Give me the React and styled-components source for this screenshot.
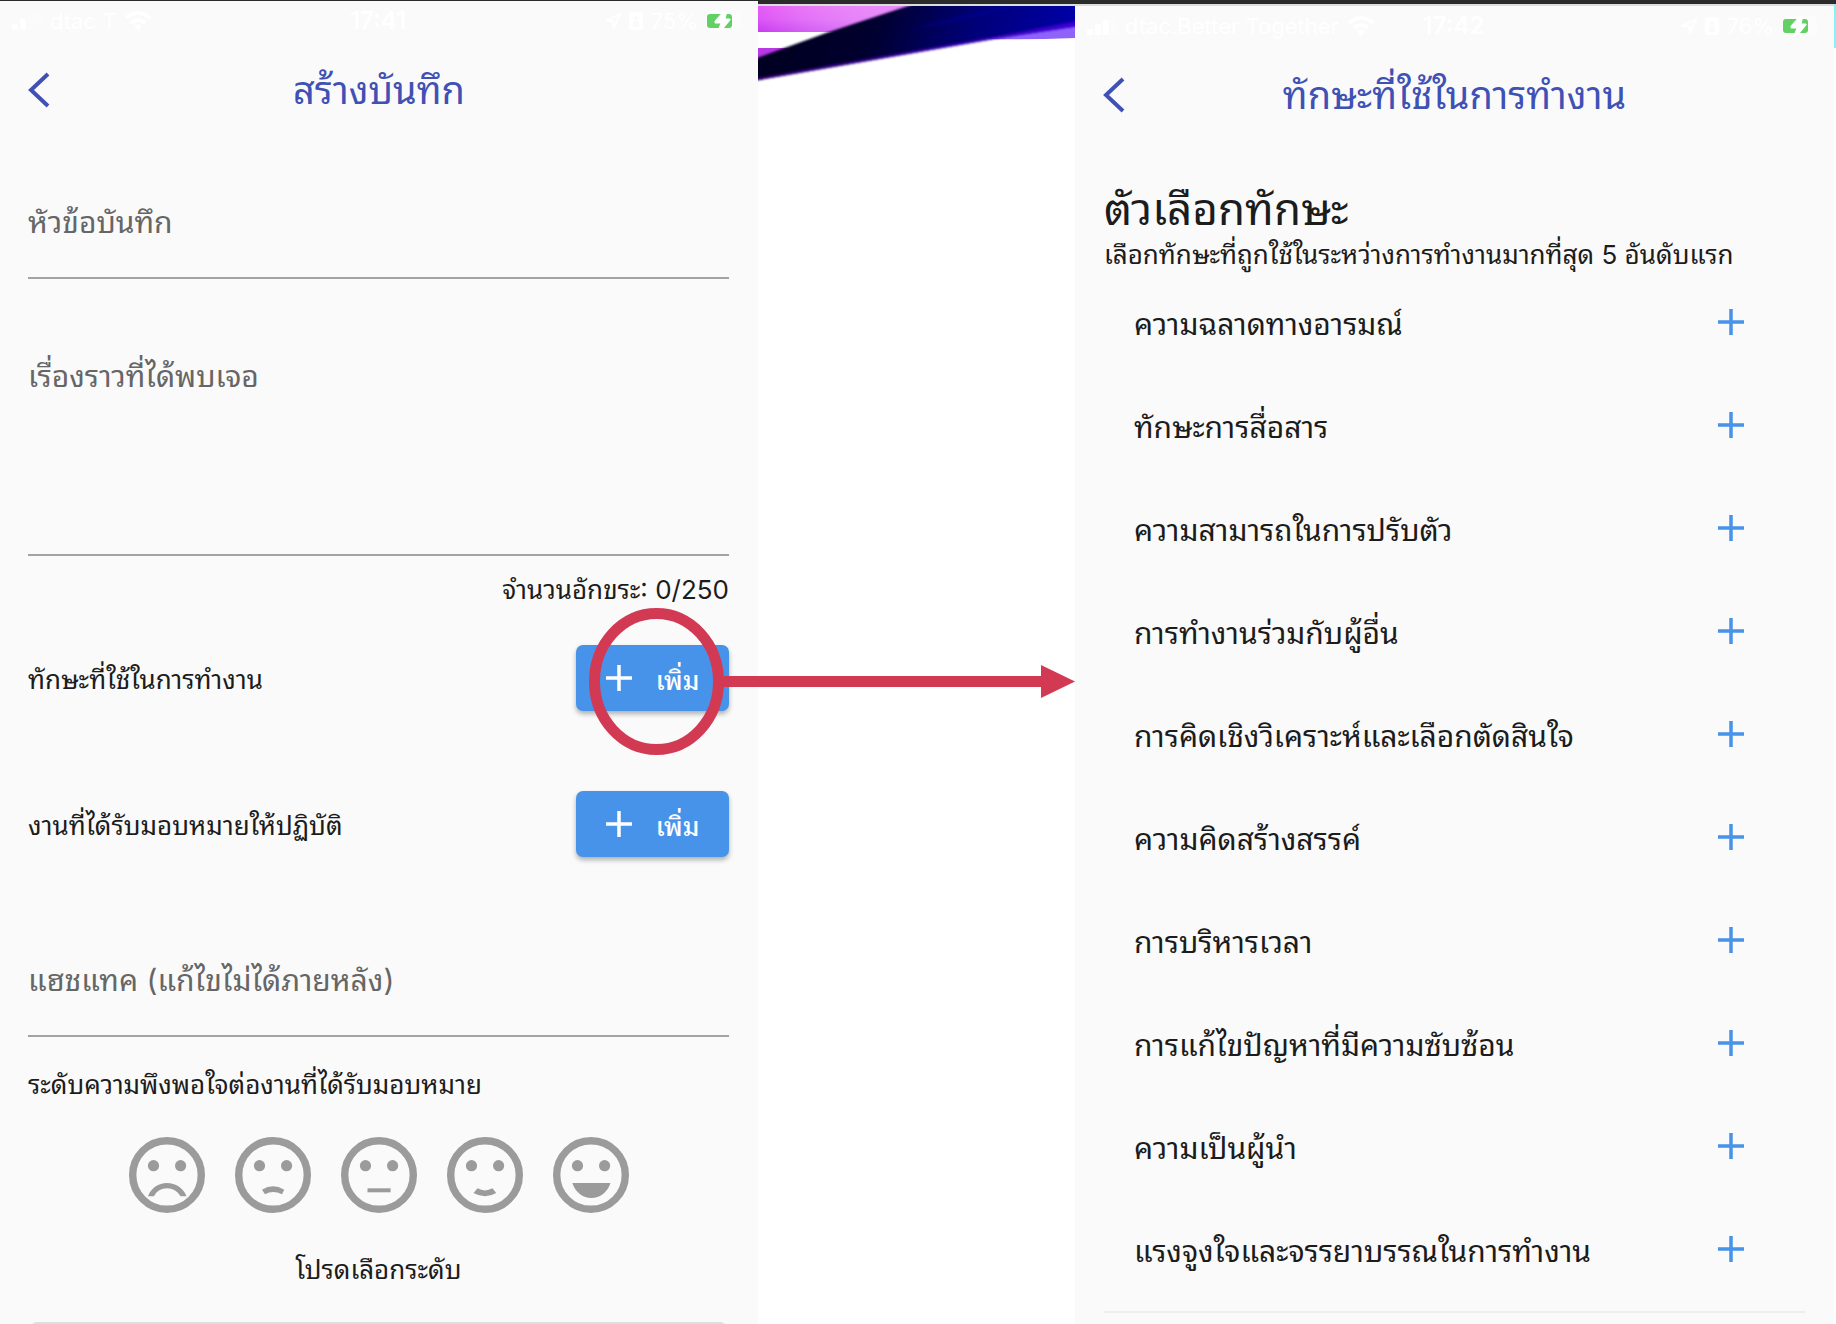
import React, { useState } from 'react';
import styled, { createGlobalStyle } from 'styled-components';

const skills = [
  'ความฉลาดทางอารมณ์',
  'ทักษะการสื่อสาร',
  'ความสามารถในการปรับตัว',
  'การทำงานร่วมกับผู้อื่น',
  'การคิดเชิงวิเคราะห์และเลือกตัดสินใจ',
  'ความคิดสร้างสรรค์',
  'การบริหารเวลา',
  'การแก้ไขปัญหาที่มีความซับซ้อน',
  'ความเป็นผู้นำ',
  'แรงจูงใจและจรรยาบรรณในการทำงาน',
];

const moods = [
  {
    name: 'แย่มาก',
    mouth:
      'M19 59.3C22 51 29.5 46 38 46S54.5 51 57.5 59.3H51.5C48.5 54 43.5 51.3 38 51.3S27.5 54 25 59.3Z',
  },
  {
    name: 'แย่',
    mouth: 'M27 52.7Q38 46 49.2 52.7L47 57.3Q38 52.7 30 57.3Z',
  },
  { name: 'ปานกลาง', mouth: 'M26.5 51.3H49.6V55.3H26.5Z' },
  {
    name: 'ดี',
    mouth: 'M30.6 51.3Q38 55.6 45.4 51.3L49.2 56Q38 62.6 26.5 56Z',
  },
  {
    name: 'ดีมาก',
    mouth: 'M19.3 46H57.5C54.5 55.3 47 61 38.4 61S22.3 55.3 19.3 46Z',
  },
];

const App = () => {
  const [story, setStory] = useState('');

  return (
    <Page>
      <GlobalStyle />
      <LogScreen>
        <StatusBar carrier="dtac T" bars={2} time="17:41" charge="75%" />
        <Header title="สร้างบันทึก" />
        <Form>
          <TextInput aria-label="หัวข้อบันทึก" placeholder="หัวข้อบันทึก" />
          <TextArea
            aria-label="เรื่องราวที่ได้พบเจอ"
            placeholder="เรื่องราวที่ได้พบเจอ"
            maxLength={250}
            value={story}
            onChange={e => setStory(e.target.value)}
          />
          <Counter>จำนวนอักขระ: {story.length}/250</Counter>
          <AddRow>
            <RowLabel>ทักษะที่ใช้ในการทำงาน</RowLabel>
            <ButtonAnchor>
              <AddButton />
              <Ring viewBox="0 0 135 147">
                <ellipse cx="67.5" cy="73.5" rx="62" ry="68" />
              </Ring>
              <Arrow>
                <ArrowShaft />
                <ArrowHead viewBox="0 0 34 33">
                  <path d="M0 0L34 16.5L0 33Z" />
                </ArrowHead>
              </Arrow>
            </ButtonAnchor>
          </AddRow>
          <AddRow>
            <RowLabel>งานที่ได้รับมอบหมายให้ปฏิบัติ</RowLabel>
            <AddButton />
          </AddRow>
          <TextInput
            aria-label="แฮชแทค"
            placeholder="แฮชแทค (แก้ไขไม่ได้ภายหลัง)"
          />
          <Rating>
            <RatingLegend>ระดับความพึงพอใจต่องานที่ได้รับมอบหมาย</RatingLegend>
            <Faces>
              {moods.map(({ name, mouth }) => (
                <FaceLabel key={name}>
                  <FaceRadio type="radio" name="mood" aria-label={name} />
                  <svg width="76" height="76" viewBox="0 0 76 76">
                    <circle
                      cx="38"
                      cy="38"
                      r="34.3"
                      fill="none"
                      stroke="currentColor"
                      strokeWidth="7.4"
                    />
                    <circle cx="24.5" cy="28.7" r="5.6" fill="currentColor" />
                    <circle cx="51.6" cy="28.7" r="5.6" fill="currentColor" />
                    <path d={mouth} fill="currentColor" />
                  </svg>
                </FaceLabel>
              ))}
            </Faces>
            <RatingHint>โปรดเลือกระดับ</RatingHint>
          </Rating>
          <SubmitEdge />
        </Form>
      </LogScreen>

      <Backdrop>
        <Wallpaper />
      </Backdrop>

      <SkillScreen>
        <StatusBar
          carrier="dtac.Better Together"
          bars={3}
          time="17:42"
          charge="76%"
        />
        <Header title="ทักษะที่ใช้ในการทำงาน" />
        <SkillBody>
          <Heading>ตัวเลือกทักษะ</Heading>
          <SubHeading>
            เลือกทักษะที่ถูกใช้ในระหว่างการทำงานมากที่สุด 5 อันดับแรก
          </SubHeading>
          <SkillList>
            {skills.map(skill => (
              <SkillItem key={skill}>
                <RowLabel>{skill}</RowLabel>
                <IconButton aria-label={`เพิ่ม ${skill}`}>
                  <Plus />
                </IconButton>
              </SkillItem>
            ))}
          </SkillList>
        </SkillBody>
      </SkillScreen>
      <Sliver />
    </Page>
  );
};

export default App;

const StatusBar = ({ carrier, bars, time, charge }) => (
  <Status>
    <StatusGroup>
      <svg width="30" height="18" viewBox="0 0 30 18" fill="#fff">
        {[6, 11, 15, 18].map((h, i) => (
          <rect
            key={h}
            x={i * 8}
            y={18 - h}
            width="6"
            height={h}
            rx="1.5"
            opacity={i < bars ? 1 : 0.3}
          />
        ))}
      </svg>
      <span>{carrier}</span>
      <svg width="28" height="20" viewBox="0 0 28 20" fill="none">
        <path
          d="M2 7Q14 -3 26 7M7 12Q14 6 21 12"
          stroke="#fff"
          strokeWidth="4"
        />
        <path d="M10 15Q14 12 18 15L14 20Z" fill="#fff" />
      </svg>
    </StatusGroup>
    <StatusTime>{time}</StatusTime>
    <StatusGroup $end>
      <svg width="16" height="16" viewBox="0 0 16 16" fill="none">
        <path d="M1 8L15 1L9 15L8 8Z" stroke="#fff" strokeWidth="2" />
      </svg>
      <svg width="14" height="18" viewBox="0 0 14 18">
        <rect width="14" height="18" rx="3" fill="#fff" />
        <path d="M4 15V11Q4 9 7 9T10 11V15Z" fill="#fafafa" />
        <circle cx="7" cy="6" r="2" fill="#fafafa" />
      </svg>
      <span>{charge}</span>
      <svg width="38" height="20" viewBox="0 0 38 20">
        <rect x="0" y="0" width="35" height="20" rx="4" fill="#fcfcfc" />
        <rect x="1" y="3" width="25" height="14" rx="3" fill="#62d164" />
        <path
          d="M18 0L9 10V12H15L12 20H15L24 9V8H19L21 0Z"
          fill="#fff"
          stroke="#fff"
        />
      </svg>
    </StatusGroup>
  </Status>
);

const Header = ({ title }) => (
  <HeaderBar>
    <BackButton aria-label="ย้อนกลับ">
      <svg width="22" height="36" viewBox="0 0 22 36" fill="none">
        <path d="M20 2L3 18L20 34" stroke="#3f51b5" strokeWidth="4" />
      </svg>
    </BackButton>
    <Title>{title}</Title>
  </HeaderBar>
);

const Plus = () => (
  <svg width="26" height="26" viewBox="0 0 26 26">
    <path
      d="M13 0V26M0 13H26"
      stroke="currentColor"
      strokeWidth="3.5"
      fill="none"
    />
  </svg>
);

const AddButton = () => (
  <BlueButton type="button">
    <Plus />
    <span>เพิ่ม</span>
  </BlueButton>
);

const Wallpaper = () => (
  <Art viewBox="0 0 317 76" preserveAspectRatio="none">
    <defs>
      <linearGradient id="pink" x1="0" y1="0" x2="0" y2="1">
        <stop offset="0" stopColor="#e65cf5" />
        <stop offset="0.5" stopColor="#dd55f5" />
        <stop offset="1" stopColor="#c83cf0" />
      </linearGradient>
      <linearGradient id="pinkFade" x1="0" y1="0" x2="1" y2="0">
        <stop offset="0" stopColor="#fff" stopOpacity="0" />
        <stop offset="1" stopColor="#e8a0ff" stopOpacity="0.7" />
      </linearGradient>
      <linearGradient id="ribbon" x1="0" y1="0" x2="1" y2="0.1">
        <stop offset="0" stopColor="#00001c" />
        <stop offset="0.4" stopColor="#00002e" />
        <stop offset="0.7" stopColor="#000078" />
        <stop offset="1" stopColor="#0000a8" />
      </linearGradient>
      <linearGradient id="edge" x1="0" y1="0" x2="1" y2="0">
        <stop offset="0" stopColor="#38007a" />
        <stop offset="1" stopColor="#3c00d8" />
      </linearGradient>
      <filter id="soft" x="-5%" y="-10%" width="110%" height="120%">
        <feGaussianBlur stdDeviation="1" />
      </filter>
    </defs>
    <rect width="170" height="26" fill="url(#pink)" />
    <rect width="170" height="26" fill="url(#pinkFade)" />
    <path d="M0 42H32L0 54Z" fill="#b838e6" />
    <path d="M230 33L317 18V32Q270 34 230 33Z" fill="#8f63fa" />
    <g filter="url(#soft)">
      <path
        d="M-4 53L68 27L162 -4H321V20L236 33L150 48L-4 75Z"
        fill="url(#ribbon)"
      />
      <path
        d="M-4 73L150 46L236 31L321 15V20L236 33L150 48L-4 75Z"
        fill="url(#edge)"
      />
      <path
        d="M150 24Q200 10 250 -1L262 -1Q210 14 150 24Z"
        fill="#0a0a9c"
        opacity="0.5"
      />
    </g>
  </Art>
);

const GlobalStyle = createGlobalStyle`
  * {
    box-sizing: border-box;
  }

  body {
    margin: 0;
    background: white;
    color: #1c1c1c;
    font-family: Inter, Thonburi, "Noto Sans Thai Looped", Loma, "Noto Sans", sans-serif;
    font-size: 26px;
    line-height: 30px;
  }

  button, input, textarea {
    font-family: inherit;
  }
`;

const Page = styled.div`
  display: grid;
  grid-template-columns: 758fr 317fr 759fr 2px;
  height: 100vh;
  overflow: hidden;
`;

const LogScreen = styled.section`
  border-top: 1px solid #2b2b2b;
  background: #fafafa;
  min-width: 0;
`;

const Backdrop = styled.div`
  border-top: 4px solid #2b2b2b;
  background: white;
  min-width: 0;
`;

const SkillScreen = styled.section`
  border-top: 4px solid #2b2b2b;
  background: #fafafa;
  min-width: 0;
`;

const Sliver = styled.div`
  border-top: 4px solid #2b2b2b;
  background: linear-gradient(#7ff5f5 44px, white 44px);
`;

const Art = styled.svg`
  display: block;
  width: 100%;
  height: 78px;
  border-top: 2px solid #dcdcdc;
`;

const Status = styled.div`
  display: grid;
  grid-template-columns: 1fr auto 1fr;
  align-items: center;
  height: 40px;
  padding: 0 14px 0 12px;
  color: white;
  font-size: 22px;

  ${SkillScreen} & {
    height: 42px;
    border-top: 2px solid #dcdcdc;
  }
`;

const StatusGroup = styled.div`
  display: flex;
  align-items: center;
  gap: 8px;
  justify-content: ${props => (props.$end ? 'flex-end' : 'flex-start')};
`;

const StatusTime = styled.div`
  font-size: 24px;
  font-weight: 600;
`;

const HeaderBar = styled.header`
  display: grid;
  grid-template-columns: 22px 1fr 22px;
  align-items: center;
  height: 98px;
  padding: 0 28px;
`;

const BackButton = styled.button`
  display: flex;
  padding: 0;
  border: 0;
  background: none;
  cursor: pointer;
`;

const Title = styled.h1`
  margin: 0;
  color: #3f51b5;
  font-size: 38px;
  font-weight: 400;
  line-height: 48px;
  text-align: center;
`;

const Form = styled.form`
  display: flex;
  flex-direction: column;
  padding: 0 29px 0 28px;
`;

const TextInput = styled.input`
  height: 84px;
  margin-top: 56px;
  padding: 0 0 28px;
  border: 0;
  border-bottom: 2px solid #a3a3a3;
  border-radius: 0;
  background: none;
  font-size: 30px;
  line-height: 54px;

  &::placeholder {
    color: #666;
    opacity: 1;
  }
`;

const TextArea = styled.textarea`
  height: 207px;
  margin-top: 70px;
  padding: 0;
  border: 0;
  border-bottom: 2px solid #a3a3a3;
  background: none;
  font-size: 30px;
  line-height: 54px;
  resize: none;

  &::placeholder {
    color: #666;
    opacity: 1;
  }
`;

const Counter = styled.div`
  height: 49px;
  padding-top: 19px;
  text-align: right;
`;

const AddRow = styled.div`
  display: flex;
  align-items: center;
  justify-content: space-between;
  height: 146px;
`;

const RowLabel = styled.span`
  padding-top: 4px;
`;

const ButtonAnchor = styled.div`
  position: relative;
`;

const BlueButton = styled.button`
  display: flex;
  align-items: center;
  justify-content: center;
  gap: 24px;
  width: 153px;
  height: 66px;
  padding: 0;
  border: 0;
  border-radius: 7px;
  background: #4793ea;
  box-shadow: 0 3px 5px rgba(0, 0, 0, 0.3);
  color: white;
  font-size: 26px;
  font-weight: 500;
  cursor: pointer;
`;

const Ring = styled.svg`
  position: absolute;
  top: -37px;
  left: 13px;
  width: 135px;
  height: 147px;
  fill: none;
  stroke: #d23a54;
  stroke-width: 11px;
  pointer-events: none;
`;

/* runs from the ring to the left edge of the skill screen */
const Arrow = styled.div`
  position: absolute;
  top: 20px;
  left: 147px;
  display: flex;
  align-items: center;
  width: calc(35px + 17.25vw);
  pointer-events: none;
`;

const ArrowShaft = styled.div`
  flex: 1;
  height: 11px;
  background: #d23a54;
`;

const ArrowHead = styled.svg`
  width: 34px;
  height: 33px;
  fill: #d23a54;
`;

const Rating = styled.fieldset`
  min-width: 0;
  margin: 33px 0 0;
  padding: 0;
  border: 0;
`;

const RatingLegend = styled.legend`
  padding: 0;
`;

const Faces = styled.div`
  display: flex;
  justify-content: center;
  gap: 30px;
  margin-top: 37px;
`;

const FaceLabel = styled.label`
  display: flex;
  position: relative;
  color: #9b9b9b;
  cursor: pointer;
`;

const FaceRadio = styled.input`
  position: absolute;
  inset: 0;
  width: 100%;
  height: 100%;
  margin: 0;
  opacity: 0;
  cursor: pointer;
`;

const RatingHint = styled.div`
  margin-top: 42px;
  text-align: center;
`;

const SubmitEdge = styled.div`
  height: 66px;
  margin: 37px 2px 0;
  border-radius: 7px;
  background: #dedede;
`;

const SkillBody = styled.div`
  padding: 0 29px;
`;

const Heading = styled.h2`
  margin: 34px 0 0;
  font-size: 44px;
  font-weight: 400;
  line-height: 62px;
`;

const SubHeading = styled.p`
  margin: 0;
  line-height: 30px;
`;

const SkillList = styled.ul`
  margin: 0;
  padding: 0 0 11px;
  border-bottom: 2px solid #eee;
  list-style: none;
`;

const SkillItem = styled.li`
  display: flex;
  align-items: center;
  justify-content: space-between;
  height: 103px;
  padding: 0 61px 0 30px;
  font-size: 30px;
`;

const IconButton = styled.button`
  display: flex;
  padding: 0;
  border: 0;
  background: none;
  color: #4793ea;
  cursor: pointer;
`;
